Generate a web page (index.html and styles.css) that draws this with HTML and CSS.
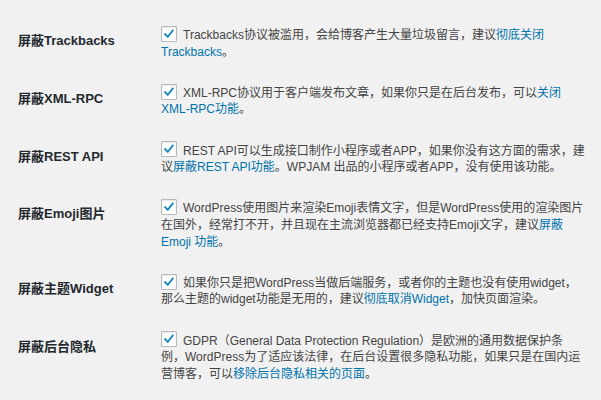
FILE: index.html
```html
<!DOCTYPE html>
<html lang="zh-CN">
<head>
<meta charset="utf-8">
<title>功能屏蔽</title>
<link rel="stylesheet" href="styles.css">
</head>
<body>
<div class="form-table">
  <div class="row">
    <div class="th">屏蔽Trackbacks</div>
    <div class="td"><label><span class="cb"><svg viewBox="0 0 16 16"><path d="M3.6 8.2l3 3.1 5.6-7.2"/></svg></span>Trackbacks协议被滥用，会给博客产生大量垃圾留言，建议<a href="#">彻底关闭Trackbacks</a>。</label></div>
  </div>
  <div class="row">
    <div class="th">屏蔽XML-RPC</div>
    <div class="td"><label><span class="cb"><svg viewBox="0 0 16 16"><path d="M3.6 8.2l3 3.1 5.6-7.2"/></svg></span>XML-RPC协议用于客户端发布文章，如果你只是在后台发布，可以<a href="#">关闭XML-RPC功能</a>。</label></div>
  </div>
  <div class="row">
    <div class="th">屏蔽REST API</div>
    <div class="td"><label><span class="cb"><svg viewBox="0 0 16 16"><path d="M3.6 8.2l3 3.1 5.6-7.2"/></svg></span>REST API可以生成接口制作小程序或者APP，如果你没有这方面的需求，建议<a href="#">屏蔽REST API功能</a>。WPJAM 出品的小程序或者APP，没有使用该功能。</label></div>
  </div>
  <div class="row">
    <div class="th">屏蔽Emoji图片</div>
    <div class="td"><label><span class="cb"><svg viewBox="0 0 16 16"><path d="M3.6 8.2l3 3.1 5.6-7.2"/></svg></span>WordPress使用图片来渲染Emoji表情文字，但是WordPress使用的渲染图片在国外，经常打不开，并且现在主流浏览器都已经支持Emoji文字，建议<a href="#">屏蔽Emoji 功能</a>。</label></div>
  </div>
  <div class="row">
    <div class="th">屏蔽主题Widget</div>
    <div class="td"><label><span class="cb"><svg viewBox="0 0 16 16"><path d="M3.6 8.2l3 3.1 5.6-7.2"/></svg></span>如果你只是把WordPress当做后端服务，或者你的主题也没有使用widget，那么主题的widget功能是无用的，建议<a href="#">彻底取消Widget</a>，加快页面渲染。</label></div>
  </div>
  <div class="row">
    <div class="th">屏蔽后台隐私</div>
    <div class="td"><label><span class="cb"><svg viewBox="0 0 16 16"><path d="M3.6 8.2l3 3.1 5.6-7.2"/></svg></span>GDPR（General Data Protection Regulation）是欧洲的通用数据保护条例，WordPress为了适应该法律，在后台设置很多隐私功能，如果只是在国内运营博客，可以<a href="#">移除后台隐私相关的页面</a>。</label></div>
  </div>
</div>
</body>
</html>
```

FILE: styles.css
```css
html, body {
  margin: 0;
  padding: 0;
  background: #f1f1f1;
}

body {
  font-family: "Liberation Sans", "Noto Sans CJK SC", sans-serif;
  font-size: 12px;
  line-height: 16.6px;
  color: #444;
  text-spacing-trim: space-all;
}

.form-table {
  padding: 15px 14px 0 18px;
}

.row {
  display: grid;
  grid-template-columns: 133px 1fr;
}

.th {
  padding: 18px 0 0 0;
  font-size: 13px;
  font-weight: bold;
  color: #23282d;
}

.td {
  padding: 12px 0 12.6px 10px;
}

.td a {
  color: #0073aa;
  text-decoration: none;
}

.cb {
  display: inline-block;
  box-sizing: border-box;
  width: 16px;
  height: 16px;
  margin: -4px 6px 0 0;
  vertical-align: middle;
  background: #fff;
  border: 1px solid #b4b9be;
  border-radius: 1px;
  box-shadow: inset 0 1px 2px rgba(0, 0, 0, 0.1);
}

.cb svg {
  display: block;
  width: 14px;
  height: 14px;
  fill: none;
  stroke: #1e8cbe;
  stroke-width: 2.2;
  stroke-linecap: square;
}
```
